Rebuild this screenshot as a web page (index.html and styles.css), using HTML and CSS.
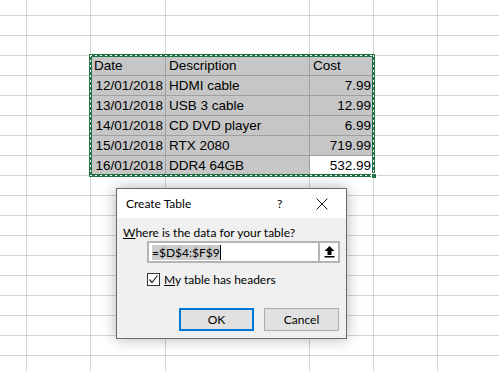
FILE: index.html
```html
<!DOCTYPE html>
<html lang="en">
<head>
  <meta charset="UTF-8">
  <title>Create Table</title>
  <link rel="stylesheet" href="styles.css">
</head>
<body>

  <div class="sheet" id="sheet"></div>

  <!-- copy / selection marquee around D4:F9 -->
  <div class="marquee"><span class="handle"></span></div>

  <div class="dialog">
    <div class="titlebar">
      <span class="title">Create Table</span>
      <span class="help">?</span>
      <span class="close">
        <svg width="12" height="12" viewBox="0 0 12 12"><path d="M0.5 0.5L11.5 11.5M11.5 0.5L0.5 11.5" stroke="#222" stroke-width="1" fill="none"/></svg>
      </span>
    </div>
    <div class="body">
      <div class="label"><u>W</u>here is the data for your table?</div>
      <div class="range">
        <span class="field"><span class="picked">=$D$4:$F$9</span><span class="caret"></span></span>
        <span class="pick">
          <svg width="11" height="12" viewBox="0 0 11 12"><path d="M5.5 0L10.5 5H7.5V9H3.5V5H0.5Z" fill="#000"/><rect x="0.5" y="10" width="10" height="1.5" fill="#000"/></svg>
        </span>
      </div>
      <div class="check">
        <span class="box">
          <svg width="11" height="11" viewBox="0 0 11 11"><path d="M1.5 5.5L4 8.5L9.5 1.5" stroke="#222" stroke-width="1.2" fill="none"/></svg>
        </span>
        <span><u>M</u>y table has headers</span>
      </div>
      <div class="buttons">
        <button class="btn primary">OK</button>
        <button class="btn">Cancel</button>
      </div>
    </div>
  </div>

  <script>
    const rows = {
      3: ["Date", "Description", "Cost"],
      4: ["12/01/2018", "HDMI cable", "7.99"],
      5: ["13/01/2018", "USB 3 cable", "12.99"],
      6: ["14/01/2018", "CD DVD player", "6.99"],
      7: ["15/01/2018", "RTX 2080", "719.99"],
      8: ["16/01/2018", "DDR4 64GB", "532.99"]
    };

    let html = "";
    for (let r = 0; r < 19; r++) {
      for (let c = 0; c < 7; c++) {
        let cls = "cell";
        let text = "";
        if (rows[r] && c >= 2 && c <= 4) {
          cls += " sel";
          text = rows[r][c - 2];
          if (r > 3 && c !== 3) cls += " num";
          if (r === 8 && c === 4) cls += " active";
        }
        if (c === 6) cls += " last";
        html += `<div class="${cls}">${text}</div>`;
      }
    }
    document.getElementById("sheet").innerHTML = html;
  </script>

</body>
</html>
```

FILE: styles.css
```css
* { margin: 0; padding: 0; box-sizing: border-box; }
body { background: #fff; width: 499px; height: 371px; overflow: hidden; position: relative; }

.sheet {
  display: grid;
  grid-template-columns: 27px 64px 75px 144px 64px 64px 61px;
  grid-template-rows: 16px repeat(18, 20px);
  font-family: "Liberation Sans", Arial, sans-serif;
  font-size: 13.5px;
  color: #000;
}

.cell {
  border-right: 1px solid #d4d4d4;
  border-bottom: 1px solid #d4d4d4;
  padding: 0 2px 0 3px;
  line-height: 19px;
  white-space: nowrap;
  overflow: hidden;
}
.cell.last { border-right: none; }
.cell.sel { background: #c6c6c6; border-color: #9f9f9f; }
.cell.num { text-align: right; }
.cell.active { background: #fff; }

.marquee {
  position: absolute;
  left: 89px;
  top: 54px;
  width: 286px;
  height: 123px;
  border: 3px solid #217346;
}
/* white dashes running along the middle of the green frame */
.marquee::before {
  content: "";
  position: absolute;
  left: -2px; top: -2px; right: -2px; bottom: -2px;
  background:
    repeating-linear-gradient(90deg, #fff 0 2px, transparent 2px 5px) top / 100% 1px no-repeat,
    repeating-linear-gradient(90deg, #fff 0 2px, transparent 2px 5px) bottom / 100% 1px no-repeat,
    repeating-linear-gradient(180deg, #fff 0 2px, transparent 2px 5px) left / 1px 100% no-repeat,
    repeating-linear-gradient(180deg, #fff 0 2px, transparent 2px 5px) right / 1px 100% no-repeat;
}
.handle {
  position: absolute;
  right: -5px;
  bottom: -5px;
  width: 6px;
  height: 6px;
  background: #217346;
  border: 1px solid #fff;
}

.dialog {
  position: absolute;
  left: 116px;
  top: 188px;
  width: 231px;
  height: 151px;
  border: 1px solid #6a6a6a;
  background: #f0f0f0;
  box-shadow: 0 0 14px rgba(0,0,0,0.3);
  font-family: Lato, "Noto Sans", sans-serif;
  font-size: 12px;
  color: #000;
  display: flex;
  flex-direction: column;
}

.titlebar {
  height: 29px;
  background: #fff;
  display: flex;
  align-items: center;
  padding-left: 9px;
}
.title { flex: 1; }
.help { width: 12px; margin-right: 27px; }
.close { width: 12px; height: 12px; margin-right: 18px; display: flex; }

.body { padding: 7px 7px 0 6px; flex: 1; }

.label { line-height: 16px; }
.label u, .check u { text-decoration: underline; }

.range {
  margin-left: 24px;
  width: 193px;
  height: 22px;
  border: 2px solid #b4b4b4;
  background: #fff;
  display: flex;
}
.field {
  flex: 1;
  display: flex;
  align-items: center;
  padding-left: 3px;
}
.picked { background: #cccccc; line-height: 15px; }
.caret { width: 1px; height: 15px; background: #000; }
.pick {
  width: 20px;
  border-left: 2px solid #b4b4b4;
  display: flex;
  align-items: center;
  justify-content: center;
  background: #fdfdfd;
}

.check {
  margin: 10px 0 0 24px;
  display: flex;
  align-items: center;
  gap: 4px;
  height: 13px;
}
.box {
  width: 13px;
  height: 13px;
  border: 1px solid #333;
  background: #fff;
  display: flex;
  align-items: center;
  justify-content: center;
}

.buttons {
  margin-top: 22px;
  display: flex;
  justify-content: flex-end;
  gap: 10px;
}
.btn {
  width: 75px;
  height: 23px;
  background: #e1e1e1;
  border: 1px solid #adadad;
  font-family: inherit;
  font-size: 12px;
  color: #000;
}
.btn.primary { border: 2px solid #0078d7; }
```
